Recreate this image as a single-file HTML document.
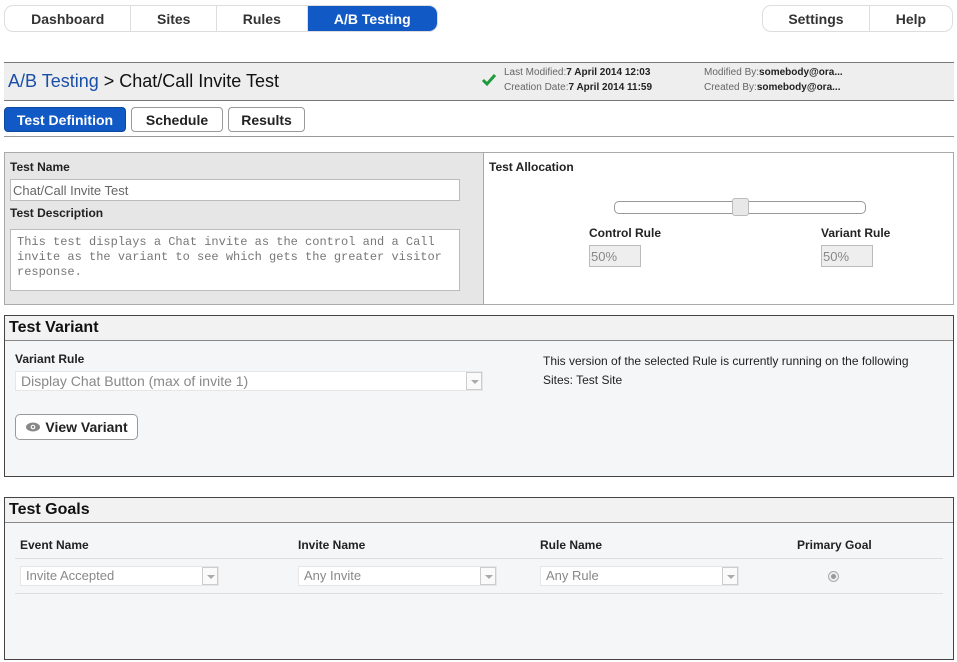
<!DOCTYPE html>
<html><head><meta charset="utf-8"><style>
*{box-sizing:border-box;margin:0;padding:0}
body{width:957px;height:662px;background:#fff;font-family:"Liberation Sans",Arial,sans-serif;position:relative;overflow:hidden;color:#222}
.a{position:absolute}
.nav{position:absolute;top:5px;height:27px;border:1px solid #ddd;border-radius:9px;display:flex;overflow:hidden;background:#fff}
.nav div{font-weight:bold;font-size:14px;color:#333;display:flex;align-items:center;justify-content:center;border-right:1px solid #ddd;height:100%}
.nav div:last-child{border-right:none}
.lbl{position:absolute;font-size:12px;font-weight:bold;color:#222}
.btn{position:absolute;border:1px solid #999;border-radius:4px;background:#fff;font-weight:bold;font-size:14px;display:flex;align-items:center;justify-content:center;color:#222}
.sel{position:absolute;background:#fff;border:1px solid #e6e6e6;font-size:14px;color:#888;padding-left:5px;line-height:18px}
.sel i{position:absolute;right:0;top:0;width:16px;height:100%;border-left:1px solid #ccc;border:1px solid #ccc;background:#fafafa}
.sel i:after{content:"";position:absolute;left:4px;top:7px;border-left:4px solid transparent;border-right:4px solid transparent;border-top:4px solid #aaa}
.box{position:absolute;left:4px;width:950px;border:1px solid #444;background:#f5f6f7}
.box .h{height:25px;background:#f2f2f2;border-bottom:1px solid #888;font-weight:bold;font-size:16px;padding:3px 0 0 4px;color:#111}
.sm{font-size:10px;color:#666;position:absolute}
.sm b{color:#222}
</style></head><body>
<div class="nav" style="left:4px;width:434px">
<div style="width:127px">Dashboard</div><div style="width:86px">Sites</div><div style="width:91px">Rules</div><div style="width:130px;background:#1159c4;color:#fff">A/B Testing</div></div>
<div class="nav" style="left:762px;width:191px"><div style="width:108px">Settings</div><div style="width:83px">Help</div></div>

<div class="a" style="left:4px;top:62px;width:950px;height:39px;background:#eee;border-top:1px solid #777;border-bottom:1px solid #777"></div>
<div class="a" style="left:8px;top:71px;font-size:18px;color:#111"><span style="color:#1a4fa8">A/B Testing</span> &gt; Chat/Call Invite Test</div>
<svg class="a" style="left:481px;top:73px" width="16" height="14"><path d="M2 7 L6 11 L14 2" stroke="#1e9a3c" stroke-width="3" fill="none"/></svg>
<div class="sm" style="left:504px;top:67px">Last Modified:<b>7 April 2014 12:03</b></div>
<div class="sm" style="left:504px;top:82px">Creation Date:<b>7 April 2014 11:59</b></div>
<div class="sm" style="left:704px;top:67px">Modified By:<b>somebody@ora...</b></div>
<div class="sm" style="left:704px;top:82px">Created By:<b>somebody@ora...</b></div>

<div class="btn" style="left:4px;top:107px;width:122px;height:25px;background:#1159c4;color:#fff;border-color:#0d4aa0">Test Definition</div>
<div class="btn" style="left:131px;top:107px;width:92px;height:25px">Schedule</div>
<div class="btn" style="left:228px;top:107px;width:77px;height:25px">Results</div>
<div class="a" style="left:4px;top:136px;width:950px;height:1px;background:#999"></div>

<div class="a" style="left:4px;top:152px;width:950px;height:153px;border:1px solid #aaa;background:#fff"></div>
<div class="a" style="left:4px;top:152px;width:480px;height:153px;border:1px solid #aaa;background:#e6e6e6"></div>
<div class="lbl" style="left:10px;top:160px">Test Name</div>
<div class="a" style="left:10px;top:179px;width:450px;height:22px;background:#fff;border:1px solid #bbb;font-size:13px;color:#666;padding:3px 2px">Chat/Call Invite Test</div>
<div class="lbl" style="left:10px;top:206px">Test Description</div>
<div class="a" style="left:10px;top:229px;width:450px;height:62px;background:#fff;border:1px solid #bbb;font-family:'Liberation Mono',monospace;font-size:12px;color:#777;padding:5px 6px;line-height:15px">This test displays a Chat invite as the control and a Call invite as the variant to see which gets the greater visitor response.</div>
<div class="lbl" style="left:489px;top:160px">Test Allocation</div>
<div class="a" style="left:614px;top:201px;width:252px;height:13px;border:1px solid #999;border-radius:5px;background:#fff"></div>
<div class="a" style="left:732px;top:198px;width:17px;height:18px;border:1px solid #bbb;border-radius:3px;background:#e8e8e8"></div>
<div class="lbl" style="left:589px;top:226px">Control Rule</div>
<div class="a" style="left:589px;top:245px;width:52px;height:22px;border:1px solid #bbb;background:#eee;font-size:13px;color:#888;padding:3px 1px">50%</div>
<div class="lbl" style="left:821px;top:226px">Variant Rule</div>
<div class="a" style="left:821px;top:245px;width:52px;height:22px;border:1px solid #bbb;background:#eee;font-size:13px;color:#888;padding:3px 1px">50%</div>

<div class="box" style="top:315px;height:162px"><div class="h">Test Variant</div></div>
<div class="lbl" style="left:15px;top:352px">Variant Rule</div>
<div class="sel" style="left:15px;top:371px;width:468px;height:20px">Display Chat Button (max of invite 1)<i></i></div>
<div class="a" style="left:543px;top:352px;font-size:12px;line-height:19px;color:#222">This version of the selected Rule is currently running on the following<br>Sites: Test Site</div>
<div class="btn" style="left:15px;top:414px;width:123px;height:26px;border-radius:5px"><svg width="16" height="10" style="margin-right:4px"><ellipse cx="8" cy="5" rx="7" ry="4.5" fill="#888"/><circle cx="8" cy="5" r="2.3" fill="#fff"/><circle cx="8" cy="5" r="1.2" fill="#888"/></svg>View Variant</div>

<div class="box" style="top:497px;height:163px"><div class="h" style="height:25px">Test Goals</div></div>
<div class="lbl" style="left:20px;top:538px">Event Name</div>
<div class="lbl" style="left:298px;top:538px">Invite Name</div>
<div class="lbl" style="left:540px;top:538px">Rule Name</div>
<div class="lbl" style="left:797px;top:538px">Primary Goal</div>
<div class="a" style="left:15px;top:558px;width:928px;height:1px;background:#ddd"></div>
<div class="sel" style="left:20px;top:566px;width:199px;height:20px;font-size:13px">Invite Accepted<i></i></div>
<div class="sel" style="left:298px;top:566px;width:199px;height:20px;font-size:13px">Any Invite<i></i></div>
<div class="sel" style="left:540px;top:566px;width:199px;height:20px;font-size:13px">Any Rule<i></i></div>
<div class="a" style="left:828px;top:571px;width:11px;height:11px;border-radius:50%;border:1px solid #aaa;background:#eee"><div style="margin:2px;width:5px;height:5px;border-radius:50%;background:#999"></div></div>
<div class="a" style="left:15px;top:593px;width:928px;height:1px;background:#ddd"></div>
</body></html>
